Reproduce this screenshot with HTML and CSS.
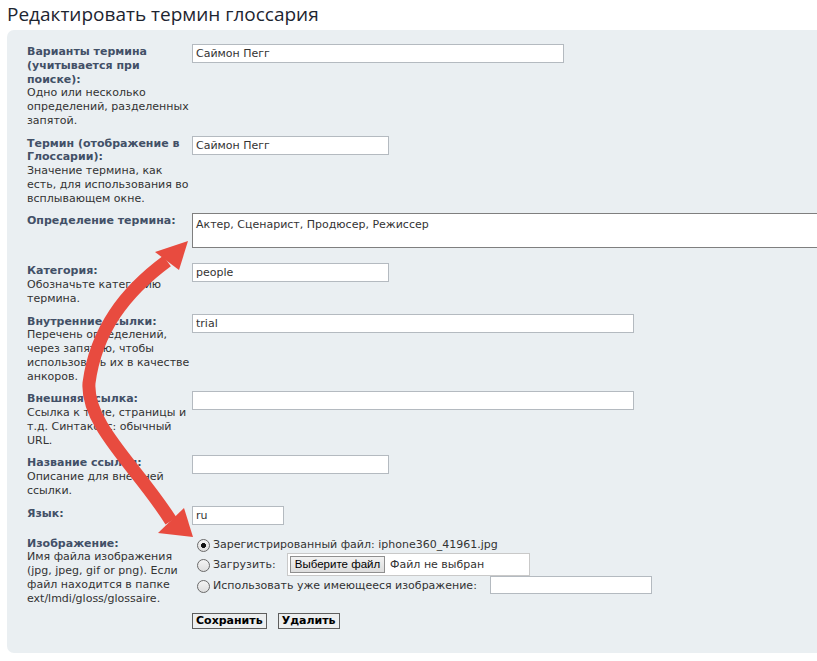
FILE: index.html
```html
<!DOCTYPE html>
<html lang="ru">
<head>
<meta charset="utf-8">
<title>Редактировать термин глоссария</title>
<link rel="stylesheet" href="styles.css">
</head>
<body>
<h1 class="title">Редактировать термин глоссария</h1>
<form class="panel">
  <div class="row">
    <div class="lbl"><b>Варианты термина<br>(учитывается при<br>поиске):</b><br>Одно или несколько<br>определений, разделенных<br>запятой.</div>
    <div class="fld"><input class="inp w-372" value="Саймон Пегг"></div>
  </div>
  <div class="row">
    <div class="lbl"><b>Термин (отображение в<br>Глоссарии):</b><br>Значение термина, как<br>есть, для использования во<br>всплывающем окне.</div>
    <div class="fld"><input class="inp w-197" value="Саймон Пегг"></div>
  </div>
  <div class="row">
    <div class="lbl"><b>Определение термина:</b></div>
    <div class="fld"><textarea class="ta">Актер, Сценарист, Продюсер, Режиссер</textarea></div>
  </div>
  <div class="row">
    <div class="lbl"><b>Категория:</b><br>Обозначьте категорию<br>термина.</div>
    <div class="fld"><input class="inp w-197" value="people"></div>
  </div>
  <div class="row">
    <div class="lbl"><b>Внутренние ссылки:</b><br>Перечень определений,<br>через запятую, чтобы<br>использовать их в качестве<br>анкоров.</div>
    <div class="fld"><input class="inp w-442" value="trial"></div>
  </div>
  <div class="row">
    <div class="lbl"><b>Внешняя ссылка:</b><br>Ссылка к теме, страницы и<br>т.д. Синтаксис: обычный<br>URL.</div>
    <div class="fld"><input class="inp w-442" value=""></div>
  </div>
  <div class="row">
    <div class="lbl"><b>Название ссылки:</b><br>Описание для внешней<br>ссылки.</div>
    <div class="fld"><input class="inp w-197" value=""></div>
  </div>
  <div class="row row-lang">
    <div class="lbl"><b>Язык:</b></div>
    <div class="fld"><input class="inp w-92" value="ru"></div>
  </div>
  <div class="row">
    <div class="lbl"><b>Изображение:</b><br>Имя файла изображения<br>(jpg, jpeg, gif or png). Если<br>файл находится в папке<br>ext/lmdi/gloss/glossaire.</div>
    <div class="fld">
      <label class="opt opt-1"><input type="radio" class="radio" name="img" checked><span>Зарегистрированный файл: iphone360_41961.jpg</span></label>
      <label class="opt opt-2"><input type="radio" class="radio" name="img"><span class="opt-name w-74">Загрузить:</span><span class="file"><span class="file-btn">Выберите файл</span><span class="file-txt">Файл не выбран</span></span></label>
      <label class="opt opt-3"><input type="radio" class="radio" name="img"><span class="opt-name w-277">Использовать уже имеющееся изображение:</span><input class="inp w-162 h-18" value=""></label>
    </div>
  </div>
  <div class="actions">
    <button type="button" class="btn">Сохранить</button>
    <button type="button" class="btn">Удалить</button>
  </div>
</form>
<svg class="arrow" width="817" height="661" viewBox="0 0 817 661" aria-hidden="true">
  <path d="M167,261 C125,292 96,330 89,383 C86,425 138,468 171,521" fill="none" stroke="#e84b3f" stroke-width="13"/>
  <polygon points="188,241 155,252 179,270" fill="#e84b3f"/>
  <polygon points="193,537 158,533 184,508" fill="#e84b3f"/>
</svg>
</body>
</html>
```
FILE: styles.css
```css
html, body {
  margin: 0;
  padding: 0;
  overflow: hidden;
  background: #fff;
}
body {
  position: relative;
  width: 817px;
  height: 661px;
  font-family: "DejaVu Sans", Verdana, sans-serif;
  font-size: 11px;
  color: #333;
}
.title {
  margin: 0;
  box-sizing: border-box;
  height: 30px;
  padding: 2px 0 0 7px;
  font-family: "Open Sans", "DejaVu Sans", sans-serif;
  font-weight: 400;
  font-size: 19px;
  line-height: 24px;
  color: #1d2531;
}
.panel {
  display: block;
  box-sizing: border-box;
  margin: 0 0 0 7px;
  width: 810px;
  height: 623px;
  padding: 14px 0 0 20px;
  background: #eaeff2;
  border-radius: 7px 0 0 7px;
  overflow: hidden;
}
.row {
  display: grid;
  grid-template-columns: 165px 1fr;
  margin-bottom: 8px;
}
.row-lang {
  min-height: 22px;
}
.lbl {
  padding-top: 1px;
  line-height: 13.75px;
  white-space: nowrap;
}
.lbl b {
  color: #425067;
}
.fld {
  min-width: 0;
}
.inp {
  display: block;
  box-sizing: border-box;
  height: 19px;
  margin: 0;
  padding: 0 3px;
  border: 1px solid #b4bac0;
  background: #fff;
  font-family: "DejaVu Sans", Verdana, sans-serif;
  font-size: 11px;
  color: #333;
}
.w-372 { width: 372px; }
.w-197 { width: 197px; }
.w-442 { width: 442px; }
.w-92 { width: 92px; }
.w-162 { width: 162px; }
.h-18 { height: 18px; }
.ta {
  display: block;
  box-sizing: border-box;
  width: 640px;
  height: 35px;
  margin: 0 0 7px;
  padding: 4px 3px 3px;
  border: 1px solid #7f7f7f;
  background: #fff;
  resize: none;
  font-family: "DejaVu Sans", Verdana, sans-serif;
  font-size: 11px;
  line-height: 14px;
  color: #333;
}
.opt {
  display: flex;
  align-items: center;
  color: #333;
}
.opt-1 { height: 17px; }
.opt-2 { height: 23px; }
.opt-3 { height: 19px; }
.radio {
  appearance: none;
  -webkit-appearance: none;
  box-sizing: border-box;
  width: 13px;
  height: 13px;
  margin: 2px 3px 0 5px;
  border: 1px solid #6a6a6a;
  border-radius: 50%;
  background: linear-gradient(#f4f4f4, #dedede);
  flex: none;
}
.radio:checked {
  background: radial-gradient(circle, #111 0, #111 2.2px, transparent 2.8px), linear-gradient(#f4f4f4, #dedede);
}
.opt-name {
  display: inline-block;
  white-space: nowrap;
}
.w-74 { width: 74px; }
.w-277 { width: 277px; }
.file {
  display: flex;
  align-items: center;
  box-sizing: border-box;
  width: 243px;
  height: 23px;
  padding-left: 2px;
  border: 1px solid #c9c9c9;
  background: #fff;
}
.file-btn {
  box-sizing: border-box;
  display: inline-flex;
  align-items: center;
  justify-content: center;
  width: 95px;
  height: 17px;
  border: 1px solid #8f8f8f;
  background: linear-gradient(#f2f2f2, #dddddd);
  font-family: "Liberation Sans", Arial, sans-serif;
  font-size: 11.5px;
  color: #000;
}
.file-txt {
  margin-left: 5px;
  color: #333;
}
.actions {
  display: flex;
  gap: 11px;
  margin: 1px 0 0 165px;
}
.btn {
  box-sizing: border-box;
  height: 16px;
  margin: 0;
  padding: 0 3px;
  border: 1px solid #5e5e5e;
  background: #eceeef;
  font-family: "DejaVu Sans", Verdana, sans-serif;
  font-size: 11px;
  font-weight: bold;
  line-height: 14px;
  color: #000;
}
.arrow {
  position: absolute;
  left: 0;
  top: 0;
  pointer-events: none;
}
```
